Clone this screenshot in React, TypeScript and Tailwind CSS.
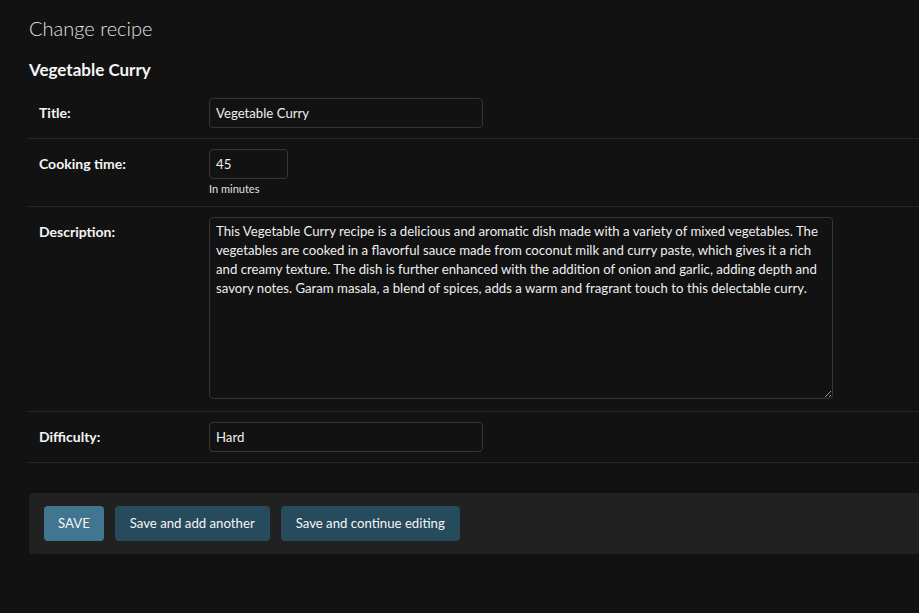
import React from "react";

const desc =
  "This Vegetable Curry recipe is a delicious and aromatic dish made with a variety of mixed vegetables. The\nvegetables are cooked in a flavorful sauce made from coconut milk and curry paste, which gives it a rich\nand creamy texture. The dish is further enhanced with the addition of onion and garlic, adding depth and\nsavory notes. Garam masala, a blend of spices, adds a warm and fragrant touch to this delectable curry.";

function Row({ label, children, className = "" }: { label: string; children: React.ReactNode; className?: string }) {
  return (
    <div className={`flex border-b border-[#272727] px-[10px] ${className}`}>
      <label className="w-[172px] shrink-0 pt-[4px] pl-[2px] text-[14px] font-bold text-[#f5f5f5]">{label}</label>
      <div className="flex flex-col">{children}</div>
    </div>
  );
}

export default function App() {
  return (
    <div
      className="min-h-[613px] w-full overflow-hidden bg-[#121212] text-[#eeeeee]"
      style={{ fontFamily: 'Lato, "Open Sans", sans-serif' }}
    >
      <div className="pl-[27px] pt-[13px]">
        <h1 className="pl-[2px] text-[20px] font-light leading-[30px] text-[#e0e0e0]">Change recipe</h1>
        <h2 className="mt-[14px] pl-[2px] text-[17px] font-bold leading-[26px] text-[#f5f5f5]">Vegetable Curry</h2>
        <div className="mt-[6px] w-[1000px]">
          <Row label="Title:" className="h-[50px] pt-[9px]">
            <input
              readOnly
              value="Vegetable Curry"
              className="h-[30px] w-[274px] rounded-[4px] border border-[#353535] bg-[#121212] px-[6px] text-[13.2px] text-[#eeeeee] outline-none"
            />
          </Row>
          <Row label="Cooking time:" className="h-[68px] pt-[10px]">
            <input
              readOnly
              value="45"
              className="h-[30px] w-[79px] rounded-[4px] border border-[#353535] bg-[#121212] px-[6px] text-[13.2px] text-[#eeeeee] outline-none"
            />
            <span className="mt-[2px] text-[11px] leading-[16px] text-[#e0e0e0]">In minutes</span>
          </Row>
          <Row label="Description:" className="h-[205px] pt-[10px]">
            <textarea
              readOnly
              value={desc}
              className="h-[182px] w-[624px] resize rounded-[4px] border border-[#353535] bg-[#121212] px-[6px] pt-[4px] text-[13.2px] leading-[19px] text-[#eeeeee] whitespace-pre outline-none overflow-hidden"
            />
          </Row>
          <Row label="Difficulty:" className="h-[51px] pt-[10px]">
            <input
              readOnly
              value="Hard"
              className="h-[30px] w-[274px] rounded-[4px] border border-[#353535] bg-[#121212] px-[6px] text-[13.2px] text-[#eeeeee] outline-none"
            />
          </Row>
        </div>
        <div className="ml-[2px] mt-[30px] flex h-[61px] w-[1000px] items-center gap-[11px] rounded-[4px] bg-[#212121] px-[15px]">
          <button className="h-[35px] rounded-[4px] bg-[#417690] px-[14px] text-[13.2px] text-[#f5f5f5]">SAVE</button>
          <button className="h-[35px] rounded-[4px] bg-[#264b5d] px-[15px] text-[13.2px] text-[#f5f5f5]">Save and add another</button>
          <button className="h-[35px] rounded-[4px] bg-[#264b5d] px-[15px] text-[13.2px] text-[#f5f5f5]">Save and continue editing</button>
        </div>
      </div>
    </div>
  );
}
